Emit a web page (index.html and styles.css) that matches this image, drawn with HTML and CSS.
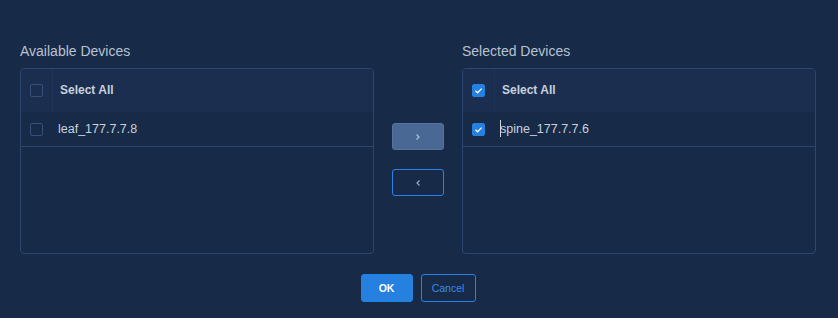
FILE: index.html
```html
<!DOCTYPE html>
<html lang="en">
<head>
    <meta charset="UTF-8">
    <title>Select Devices</title>
    <link rel="stylesheet" href="styles.css">
</head>
<body>
    <div class="dialog">
        <div class="transfer">
            <div class="column">
                <div class="column-title">Available Devices</div>
                <div class="panel">
                    <div class="panel-header">
                        <div class="check-cell"><span class="checkbox"></span></div>
                        <div class="header-text">Select All</div>
                    </div>
                    <div class="item">
                        <div class="check-cell"><span class="checkbox"></span></div>
                        <div class="item-text">leaf_177.7.7.8</div>
                    </div>
                </div>
            </div>

            <div class="actions">
                <button class="move-button move-right">
                    <svg width="8" height="8" viewBox="0 0 8 8"><path d="M2.5 1.5 L5 4 L2.5 6.5" fill="none" stroke="currentColor" stroke-width="1.2"/></svg>
                </button>
                <button class="move-button move-left">
                    <svg width="8" height="8" viewBox="0 0 8 8"><path d="M5.5 1.5 L3 4 L5.5 6.5" fill="none" stroke="currentColor" stroke-width="1.2"/></svg>
                </button>
            </div>

            <div class="column">
                <div class="column-title">Selected Devices</div>
                <div class="panel">
                    <div class="panel-header">
                        <div class="check-cell"><span class="checkbox checked"><svg width="13" height="13" viewBox="0 0 13 13"><path d="M3.5 6.8 L5.6 8.8 L9.6 4.6" fill="none" stroke="#fff" stroke-width="1.3"/></svg></span></div>
                        <div class="header-text">Select All</div>
                    </div>
                    <div class="item">
                        <div class="check-cell"><span class="checkbox checked"><svg width="13" height="13" viewBox="0 0 13 13"><path d="M3.5 6.8 L5.6 8.8 L9.6 4.6" fill="none" stroke="#fff" stroke-width="1.3"/></svg></span></div>
                        <div class="item-text"><span class="caret"></span>spine_177.7.7.6</div>
                    </div>
                </div>
            </div>
        </div>

        <div class="footer">
            <button class="ok-button">OK</button>
            <button class="cancel-button">Cancel</button>
        </div>
    </div>
</body>
</html>
```

FILE: styles.css
```css
body {
    font-family: "Liberation Sans", Arial, sans-serif;
    background-color: #172a48;
    color: #c8d0dc;
    margin: 0;
    padding: 0;
}
.dialog {
    padding: 42px 0 0 20px;
    width: 796px;
}
.transfer {
    display: flex;
}
.column {
    width: 354px;
}
.column-title {
    font-size: 14px;
    line-height: 18px;
    color: #b8c2d0;
    margin-bottom: 8px;
}
.panel {
    height: 186px;
    box-sizing: border-box;
    border: 1px solid #2c4670;
    border-radius: 4px;
    overflow: hidden;
}
.panel-header {
    display: flex;
    align-items: center;
    height: 43px;
    background: #1b2e4f;
}
.panel-header .check-cell {
    border-right: 1px solid #1f3558;
    height: 100%;
}
.check-cell {
    width: 31px;
    display: flex;
    align-items: center;
    justify-content: center;
    flex-shrink: 0;
}
.checkbox {
    width: 13px;
    height: 13px;
    box-sizing: border-box;
    border: 1px solid #34507a;
    border-radius: 2px;
    display: block;
}
.checkbox.checked {
    background: #2680e0;
    border-color: #2680e0;
}
.checkbox svg {
    display: block;
    margin: -1px;
}
.header-text {
    font-size: 12px;
    font-weight: bold;
    color: #c8d0dc;
    padding-left: 7px;
    margin-top: -1px;
}
.item {
    display: flex;
    align-items: center;
    height: 34px;
    border-bottom: 1px solid #2c4670;
}
.item-text {
    font-size: 12.5px;
    color: #c8d2de;
    padding-left: 6px;
    position: relative;
}
.caret {
    position: absolute;
    left: 6px;
    top: -2px;
    height: 17px;
    border-left: 1px solid #d0d8e4;
}
.actions {
    width: 52px;
    margin: 81px 18px 0 18px;
    display: flex;
    flex-direction: column;
    gap: 19px;
}
.move-button {
    width: 52px;
    height: 27px;
    box-sizing: border-box;
    border-radius: 3px;
    padding: 0;
    display: flex;
    align-items: center;
    justify-content: center;
    cursor: pointer;
}
.move-right {
    background: #4a6894;
    border: 1px solid #56739d;
    color: #aabedb;
}
.move-left {
    background: transparent;
    border: 1px solid #2b82e6;
    color: #94acd0;
}
.footer {
    display: flex;
    justify-content: center;
    gap: 8px;
    margin-top: 20px;
}
.ok-button,
.cancel-button {
    height: 28px;
    box-sizing: border-box;
    border-radius: 3px;
    font-family: "Liberation Sans", Arial, sans-serif;
    font-size: 10.5px;
    padding: 0;
    cursor: pointer;
}
.ok-button {
    width: 52px;
    background: #2680e0;
    border: 1px solid #2680e0;
    color: #fff;
    font-weight: bold;
}
.cancel-button {
    width: 55px;
    background: transparent;
    border: 1px solid #2b82e6;
    color: #3a8ae6;
}
```
